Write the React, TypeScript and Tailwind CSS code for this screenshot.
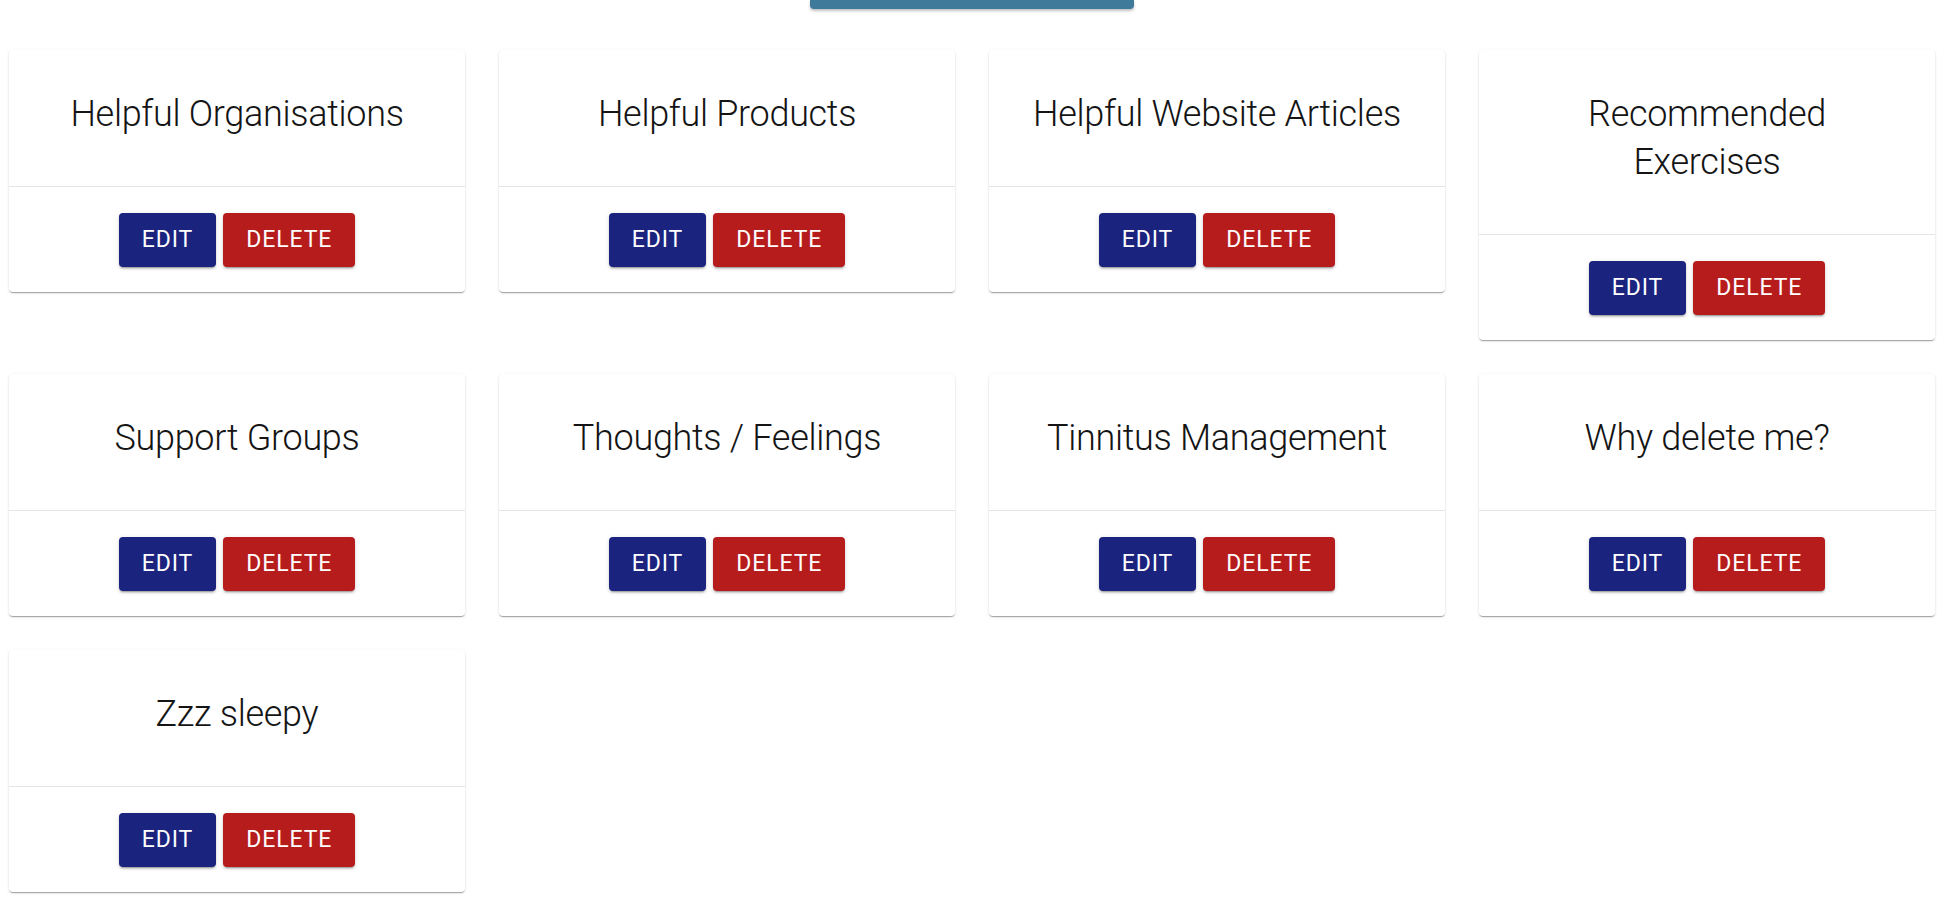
import React from "react";

const categories = [
  "Helpful Organisations",
  "Helpful Products",
  "Helpful Website Articles",
  "Recommended Exercises",
  "Support Groups",
  "Thoughts / Feelings",
  "Tinnitus Management",
  "Why delete me?",
  "Zzz sleepy",
];

function CategoryCard({ title }: { title: string }) {
  return (
    <div className="bg-white rounded-[4px] shadow-[0_2px_1px_-1px_rgba(0,0,0,0.2),0_1px_1px_0_rgba(0,0,0,0.14),0_1px_3px_0_rgba(0,0,0,0.12)]">
      <div className="px-[40px] pt-[40px] pb-[48px] text-center">
        <h2 className="text-[36px] leading-[48px] font-light tracking-[-0.3px] text-[#141414]">{title}</h2>
      </div>
      <div className="border-t border-[rgba(0,0,0,0.1)] flex justify-center gap-[7px] pt-[26px] pb-[25px]">
        <button className="h-[54px] px-[23px] rounded-[4px] bg-[#1a237e] text-white text-[23px] font-normal uppercase tracking-[0.04em] shadow-[0_3px_1px_-2px_rgba(0,0,0,0.2),0_2px_2px_0_rgba(0,0,0,0.14),0_1px_5px_0_rgba(0,0,0,0.12)]">
          Edit
        </button>
        <button className="h-[54px] px-[23px] rounded-[4px] bg-[#b71c1c] text-white text-[23px] font-normal uppercase tracking-[0.04em] shadow-[0_3px_1px_-2px_rgba(0,0,0,0.2),0_2px_2px_0_rgba(0,0,0,0.14),0_1px_5px_0_rgba(0,0,0,0.12)]">
          Delete
        </button>
      </div>
    </div>
  );
}

export default function App() {
  return (
    <div className="min-h-screen bg-white font-['Roboto',sans-serif]">
      <div className="flex justify-center">
        <div className="h-[9px] w-[324px] ml-[-4px] bg-[#3f7a9b] rounded-b-[4px] shadow-[0_2px_3px_rgba(0,0,0,0.25)]" />
      </div>
      <div className="pl-[9px] pr-[13px] pt-[41px] pb-[20px]">
        <div className="grid grid-cols-4 gap-[34px] items-start">
          {categories.map((c) => (
            <CategoryCard key={c} title={c} />
          ))}
        </div>
      </div>
    </div>
  );
}
